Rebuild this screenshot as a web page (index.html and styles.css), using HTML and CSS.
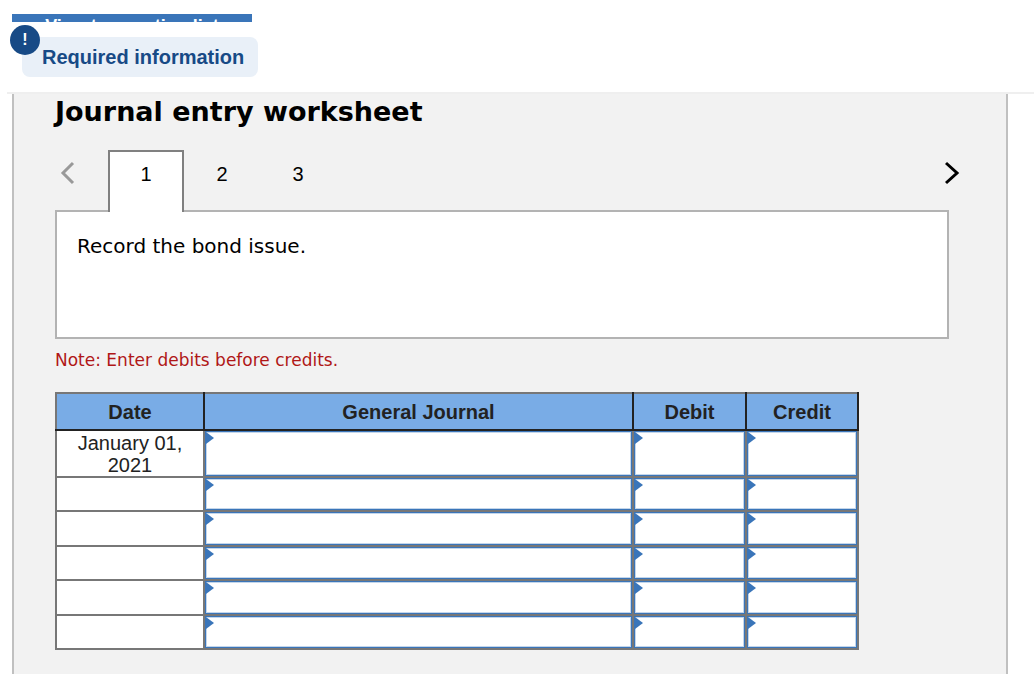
FILE: index.html
```html
<!DOCTYPE html>
<html lang="en">
<head>
  <meta charset="UTF-8" />
  <meta name="viewport" content="width=device-width, initial-scale=1.0"/>
  <title>Journal entry worksheet</title>
  <link rel="stylesheet" href="styles.css">
</head>
<body>
  <header class="top">
    <button type="button" class="view-list">View transaction list</button>
    <div class="required">
      <span class="alert">!</span>
      Required information
    </div>
  </header>

  <main class="worksheet">
    <h1>Journal entry worksheet</h1>

    <nav class="tabs">
      <button type="button" class="arrow prev" aria-label="Previous" disabled>
        <svg width="16" height="24" viewBox="0 0 16 24"><path d="M14 2 L4 12 L14 22" /></svg>
      </button>
      <button type="button" class="tab active">1</button>
      <button type="button" class="tab">2</button>
      <button type="button" class="tab">3</button>
      <button type="button" class="arrow next" aria-label="Next">
        <svg width="16" height="24" viewBox="0 0 16 24"><path d="M1 2 L12 12 L1 22" /></svg>
      </button>
    </nav>

    <section class="instruction">Record the bond issue.</section>

    <p class="note">Note: Enter debits before credits.</p>

    <table class="journal">
      <colgroup>
        <col class="col-date"><col><col class="col-debit"><col class="col-credit">
      </colgroup>
      <thead>
        <tr><th>Date</th><th>General Journal</th><th>Debit</th><th>Credit</th></tr>
      </thead>
      <tbody>
        <tr class="first">
          <td>January 01, 2021</td>
          <td class="entry"><input type="text" aria-label="General Journal 1"></td>
          <td class="entry"><input type="text" aria-label="Debit 1"></td>
          <td class="entry"><input type="text" aria-label="Credit 1"></td>
        </tr>
        <tr>
          <td></td>
          <td class="entry"><input type="text" aria-label="General Journal 2"></td>
          <td class="entry"><input type="text" aria-label="Debit 2"></td>
          <td class="entry"><input type="text" aria-label="Credit 2"></td>
        </tr>
        <tr>
          <td></td>
          <td class="entry"><input type="text" aria-label="General Journal 3"></td>
          <td class="entry"><input type="text" aria-label="Debit 3"></td>
          <td class="entry"><input type="text" aria-label="Credit 3"></td>
        </tr>
        <tr>
          <td></td>
          <td class="entry"><input type="text" aria-label="General Journal 4"></td>
          <td class="entry"><input type="text" aria-label="Debit 4"></td>
          <td class="entry"><input type="text" aria-label="Credit 4"></td>
        </tr>
        <tr>
          <td></td>
          <td class="entry"><input type="text" aria-label="General Journal 5"></td>
          <td class="entry"><input type="text" aria-label="Debit 5"></td>
          <td class="entry"><input type="text" aria-label="Credit 5"></td>
        </tr>
        <tr>
          <td></td>
          <td class="entry"><input type="text" aria-label="General Journal 6"></td>
          <td class="entry"><input type="text" aria-label="Debit 6"></td>
          <td class="entry"><input type="text" aria-label="Credit 6"></td>
        </tr>
      </tbody>
    </table>
  </main>
</body>
</html>
```

FILE: styles.css
```css
* { box-sizing: border-box; }
body {
  font-family: Arial, "Liberation Sans", sans-serif;
  font-size: 20px;
  background: #fff;
  color: #000;
  margin: 0;
  min-height: 100vh;
  display: flex;
  flex-direction: column;
}
button {
  font: inherit;
  color: inherit;
  background: none;
  border: none;
  padding: 0;
  cursor: pointer;
}

/* header */
.top {
  display: flex;
  flex-direction: column;
  align-items: flex-start;
  margin-left: 7px;
  padding: 14px 0 15px 5px;
  border-bottom: 2px solid #efefef;
}
.view-list {
  display: flex;
  justify-content: center;
  width: 240px;
  height: 8px;
  overflow: hidden;
  background: #3a75b9;
  color: #fff;
  font-size: 18px;
  font-weight: bold;
  line-height: 24px;
}
.required {
  position: relative;
  margin: 15px 0 0 10px;
  padding: 0 14px 0 20px;
  border-radius: 8px;
  background: #e9f0f8;
  color: #174a86;
  font-weight: bold;
  line-height: 40px;
}
.alert {
  position: absolute;
  top: -12px;
  left: -12px;
  width: 30px;
  height: 30px;
  border-radius: 50%;
  background: #174a86;
  color: #fff;
  font-size: 16px;
  line-height: 30px;
  text-align: center;
}

/* worksheet panel */
.worksheet {
  flex: 1;
  margin: 0 26px 0 12px;
  padding: 0 57px 24px 41px;
  background: #f2f2f2;
  border: solid #c0c0c0;
  border-width: 0 2px;
}
h1 {
  margin: 0;
  font-family: Verdana, "DejaVu Sans", sans-serif;
  font-size: 27px;
  line-height: 36px;
}
.tabs {
  display: flex;
  align-items: flex-start;
  margin: 20px -12px -2px 4px;
  position: relative;
}
.tab {
  width: 76px;
  height: 62px;
  padding-bottom: 14px;
}
.tab.active {
  padding-bottom: 16px;
  background: #fff;
  border: 2px solid #808080;
  border-bottom: none;
}
.arrow {
  height: 46px;
}
.arrow svg {
  display: block;
  fill: none;
  stroke: #000;
  stroke-width: 3;
}
.prev {
  margin-right: 33px;
}
.prev svg {
  stroke: #999;
}
.next {
  margin-left: auto;
}
.instruction {
  min-height: 129px;
  padding: 20px;
  background: #fff;
  border: 2px solid #b3b3b3;
  font-family: Verdana, "DejaVu Sans", sans-serif;
  font-size: 20px;
  line-height: 28px;
}
.note {
  margin: 9px 0 20px;
  color: #b01717;
  font-family: Verdana, "DejaVu Sans", sans-serif;
  font-size: 17px;
  line-height: 24px;
}

/* journal table */
.journal {
  width: 100%;
  max-width: 804px;
  table-layout: fixed;
  border-collapse: collapse;
  background: #fff;
  color: #222;
  line-height: 23px;
  text-align: center;
}
.col-date { width: 148px; }
.col-debit { width: 113px; }
.col-credit { width: 112px; }
.journal th {
  height: 37px;
  padding: 1px 0 0;
  background: #79ace6;
  border: 2px solid #222;
  border-top-color: #777;
}
.journal th:first-child {
  border-left-color: #777;
}
.journal td {
  height: 34px;
  padding: 0;
  border: 2px solid #777;
}
.journal tr:nth-child(odd) td {
  height: 35px;
}
.journal tr.first td {
  height: 47px;
  padding: 0 8px;
  line-height: 22px;
}
.journal thead + tbody .first td {
  border-top-color: #222;
}
.journal tr td.entry {
  position: relative;
  padding: 0;
}
.entry input {
  display: block;
  width: 100%;
  height: 100%;
  padding: 0 10px;
  border: 1px solid #3a75b9;
  border-radius: 0;
  background: #fff;
  box-shadow: inset 0 0 0 1px #c4d6ea;
  font: inherit;
}
/* blue marker in the corner of each editable cell */
.entry::before {
  content: "";
  position: absolute;
  top: 1px;
  left: 1px;
  border: solid transparent;
  border-width: 6px 0 6px 8px;
  border-left-color: #3a75b9;
}
```
